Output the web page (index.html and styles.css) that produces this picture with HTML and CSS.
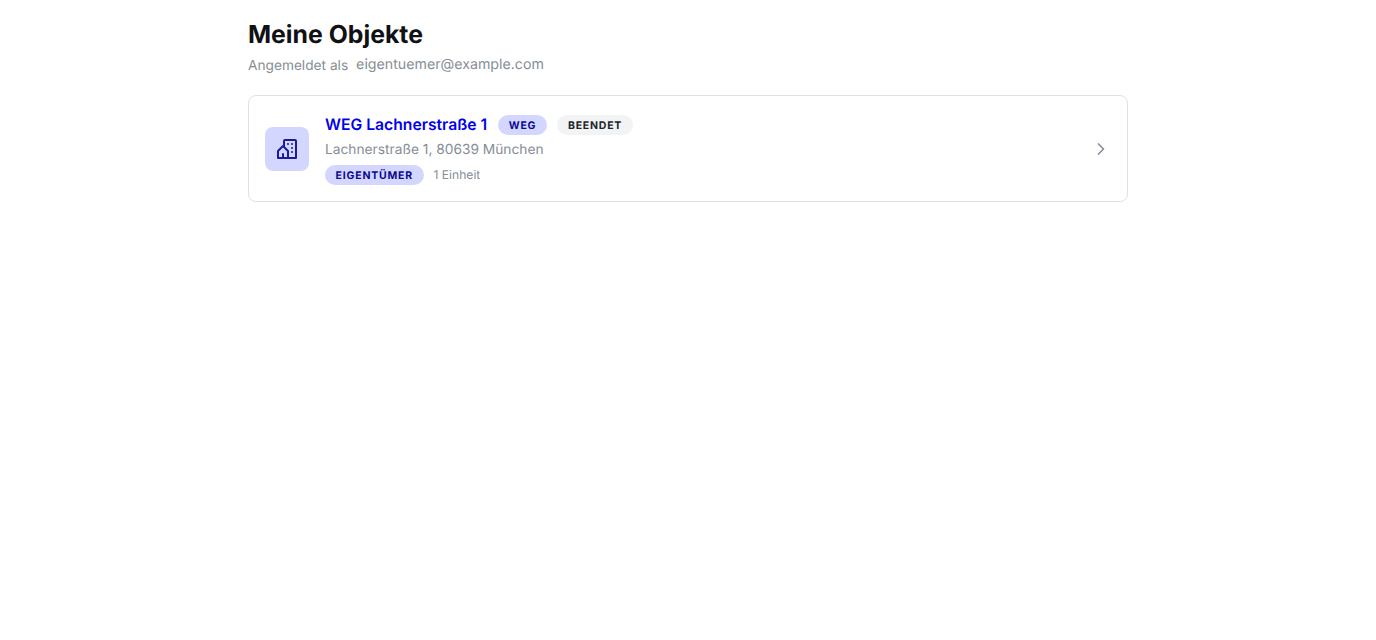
FILE: index.html
```html
<!DOCTYPE html>
<html lang="de">
<head>
<meta charset="utf-8">
<title>Meine Objekte</title>
<link rel="stylesheet" href="styles.css">
</head>
<body>
<main class="page">
  <h1 class="title">Meine Objekte</h1>
  <div class="subline"><span class="sub-label">Angemeldet als</span><span class="sub-mail">eigentuemer@example.com</span></div>
  <a class="card" href="#">
    <div class="icon-box">
      <svg width="24" height="24" viewBox="0 0 24 24" fill="none" stroke="currentColor" stroke-width="2" stroke-linecap="round" stroke-linejoin="round"><path d="M8 9l5 5v7h-5v-4m0 4h-5v-7l5 -5m1 1v-6a1 1 0 0 1 1 -1h10a1 1 0 0 1 1 1v17h-8"/><path d="M13 7l0 .01"/><path d="M17 7l0 .01"/><path d="M17 11l0 .01"/><path d="M17 15l0 .01"/></svg>
    </div>
    <div class="info">
      <div class="row">
        <span class="name">WEG Lachnerstraße 1</span>
        <span class="badge badge-blue">WEG</span>
        <span class="badge badge-gray">BEENDET</span>
      </div>
      <div class="address">Lachnerstraße 1, 80639 München</div>
      <div class="row row-meta">
        <span class="badge badge-blue">EIGENTÜMER</span>
        <span class="units">1 Einheit</span>
      </div>
    </div>
    <svg class="chevron" width="20" height="20" viewBox="0 0 24 24" fill="none" stroke="currentColor" stroke-width="2" stroke-linecap="round" stroke-linejoin="round"><path d="M9 6l6 6l-6 6"/></svg>
  </a>
</main>
</body>
</html>
```
FILE: styles.css
```css
* { box-sizing: border-box; }
html, body { margin: 0; padding: 0; background: #fff; }
body { font-family: Inter, "Liberation Sans", sans-serif; text-rendering: geometricPrecision; font-optical-sizing: none; }
.page { width: 880px; margin: 0 auto; padding-top: 16px; }
.title { margin: 0; font-size: 24.8px; line-height: 36px; font-weight: 700; color: #0f1115; }
.subline { display: flex; align-items: center; gap: 8px; margin-top: 3px; height: 20px; color: #868e96; font-size: 14px; line-height: 20px; }
.sub-label { position: relative; top: 1px; font-size: 13.7px; }
.sub-mail { font-size: 14.2px; }
.card { display: flex; align-items: center; gap: 16px; margin-top: 20px; height: 107px; padding: 0 16px; border: 1px solid #dee2e6; border-radius: 8px; text-decoration: none; background: #fff; }
.icon-box { width: 44px; height: 44px; flex: none; display: flex; align-items: center; justify-content: center; border-radius: 8px; background: #d3d6ff; color: #1a1a9e; }
.info { flex: 1; min-width: 0; display: flex; flex-direction: column; gap: 4px; padding-top: 3px; }
.row { display: flex; align-items: center; gap: 10px; height: 20px; }
.row-meta { margin-top: 1px; }
.name { font-size: 15.7px; line-height: 20px; font-weight: 600; color: #0000ee; margin: 0 1px 1px 0; }
.badge { display: inline-flex; align-items: center; height: 20px; padding: 0 10.6px; border-radius: 10px; font-size: 10.5px; font-weight: 700; letter-spacing: 0.8px; }
.badge-blue { background: #d3d6ff; color: #0a0a8c; }
.badge-gray { background: #f1f3f5; color: #212529; padding: 0 11px; }
.address { font-size: 13.75px; line-height: 20px; color: #868e96; margin-top: 1px; }
.units { font-size: 12.1px; color: #868e96; margin-bottom: 2px; }
.chevron { flex: none; color: #868e96; }
```
